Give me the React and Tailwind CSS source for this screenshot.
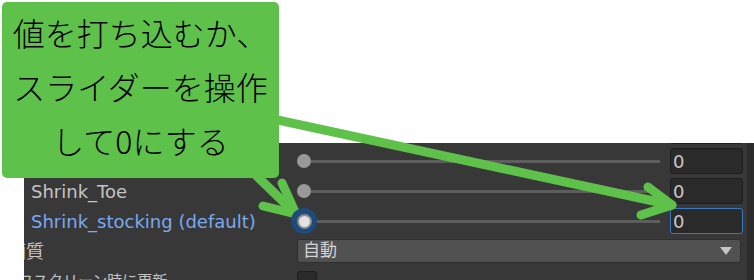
const labelFont = { fontFamily: '"DejaVu Sans", "Noto Sans CJK JP", sans-serif' };

function Knob({ active }) {
  if (active) {
    return (
      <div className="w-[26px] h-[26px] -ml-[6px] -mr-[6px] rounded-full bg-[#1f4b7a] flex items-center justify-center shrink-0 relative z-10">
        <div className="w-[15px] h-[15px] rounded-full bg-[#e2e2e2] border-2 border-[#8c8c8c]" />
      </div>
    );
  }
  return <div className="w-[14px] h-[14px] rounded-full bg-[#999999] shrink-0" />;
}

function NumberField({ focused }) {
  return (
    <div
      className={`w-[73px] h-[26px] rounded-[3px] bg-[#2a2a2a] border flex items-center pl-[2px] text-[18px] text-[#c8c8c8] ${
        focused ? "border-[#3a79c2]" : "border-[#1e1e1e]"
      }`}
    >
      0
    </div>
  );
}

// label is hidden under the callout for the top rows
function SliderRow({ label, active }) {
  return (
    <div className="flex items-center h-[30px]">
      <div
        className={`w-[273px] shrink-0 pl-[7px] text-[18px] whitespace-nowrap ${
          active ? "text-[#7aa9f0]" : "text-[#c4c4c4]"
        }`}
      >
        {label}
      </div>
      <div className="flex-1 flex items-center">
        <Knob active={active} />
        <div className="flex-1 h-[3px] bg-[#5e5e5e]" />
        <div className="w-[10px]" />
        <NumberField focused={active} />
      </div>
    </div>
  );
}

export default function App() {
  return (
    <div className="relative w-[754px] h-[280px] bg-white overflow-hidden" style={labelFont}>
      <div className="pt-[143px] pl-[24px] h-full">
        <div className="flex h-full bg-[#383838] overflow-hidden">
          <div className="flex-1 -mt-[27px] pr-[4px]">
            <SliderRow />
            <SliderRow />
            <SliderRow label="Shrink_Toe" />
            <SliderRow label="Shrink_stocking (default)" active />
            <div className="flex items-center h-[30px]">
              <div className="w-[273px] shrink-0 -ml-[16px] text-[18px] text-[#c4c4c4] whitespace-nowrap">
                画質
              </div>
              <div className="flex-1 pr-[2px] ml-[16px]">
                <div className="h-[24px] rounded-[3px] bg-[#515151] border border-[#2f2f2f] flex items-center justify-between pl-[5px] pr-[8px] text-[17px] text-[#d4d4d4]">
                  <span>自動</span>
                  <svg width="12" height="8" viewBox="0 0 12 8">
                    <path d="M0 0 H12 L6 8 Z" fill="#c4c4c4" />
                  </svg>
                </div>
              </div>
            </div>
            <div className="flex items-center h-[30px]">
              <div className="w-[273px] shrink-0 -ml-[21px] text-[15px] text-[#c4c4c4] whitespace-nowrap">
                オフスクリーン時に更新
              </div>
              <div className="ml-[21px] w-[20px] h-[20px] rounded-[3px] bg-[#2a2a2a] border border-[#1e1e1e]" />
            </div>
          </div>
          <div className="w-[7px] bg-[#2c2c2c] shrink-0" />
        </div>
      </div>

      <svg className="absolute inset-0 pointer-events-none" width="754" height="280" viewBox="0 0 754 280">
        <g stroke="#5ec24a" strokeWidth="9" strokeLinecap="round" strokeLinejoin="round" fill="none">
          <line x1="250" y1="114" x2="672" y2="205" />
          <polyline points="648,187 672,205 641,215" />
          <line x1="235" y1="155" x2="296" y2="214" />
          <polyline points="282,183 296,214 263,206" />
        </g>
      </svg>

      <div
        className="absolute left-[2px] top-[2px] w-[277px] h-[176px] rounded-[5px] bg-[#5ec24a] pt-[3px] text-center text-[32px] font-light leading-[54px] text-black"
        style={{ fontFamily: '"Noto Sans CJK JP", sans-serif' }}
      >
        <div>値を打ち込むか、</div>
        <div>スライダーを操作</div>
        <div>して0にする</div>
      </div>
    </div>
  );
}
